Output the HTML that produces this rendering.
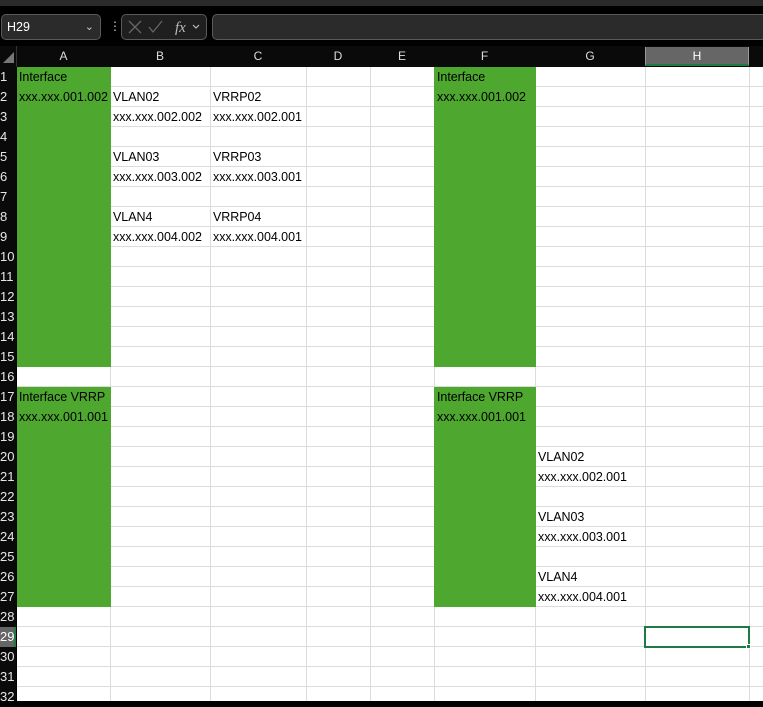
<!DOCTYPE html>
<html><head><meta charset="utf-8"><style>
*{margin:0;padding:0;box-sizing:border-box}
body{width:763px;height:701px;overflow:hidden;background:#000;font-family:"Liberation Sans",Arial,sans-serif;position:relative}
.a{position:absolute}
.grid{left:17px;top:67px;width:746px;height:634px;background:#fff repeating-linear-gradient(to bottom,transparent 0,transparent 19px,#dcdcdc 19px,#dcdcdc 20px)}
.v{position:absolute;top:67px;height:634px;width:1px;background:#dcdcdc}
.g{position:absolute;background:#4ea72e}
.t{position:absolute;font-size:12.5px;color:#000;white-space:nowrap;line-height:20px;letter-spacing:-0.05px}
.ch{position:absolute;top:47px;height:19px;color:#ddd;font-size:12px;text-align:center;line-height:19px}
.rh{position:absolute;left:0;width:16px;height:20px;color:#e8e8e8;font-size:13px;line-height:20px;padding-left:0;overflow:hidden;white-space:nowrap}
</style></head><body>
<div class="a" style="left:0;top:0;width:763px;height:6px;background:#2b2b2b"></div>
<div class="a" style="left:1px;top:14px;width:100px;height:26px;border:1px solid #5a5a5a;border-radius:5px;background:#2b2b2b;color:#fff;font-size:12.5px;line-height:24px;padding-left:5px">H29<span style="position:absolute;right:6px;top:0;color:#ccc;font-size:11px">&#8964;</span></div>
<div class="a" style="left:109px;top:19px;color:#ccc;font-size:12px;line-height:14px">&#8942;</div>
<div class="a" style="left:121px;top:14px;width:86px;height:26px;border:1px solid #5a5a5a;border-radius:5px;background:#1f1f1f"></div>
<svg class="a" style="left:121px;top:14px" width="86" height="26"><path d="M8 7l12 12M20 7L8 19" stroke="#666" stroke-width="1.3" fill="none"/><path d="M28 13l4 5 9-11" stroke="#666" stroke-width="1.3" fill="none"/><text x="54" y="18" font-family="Liberation Serif" font-style="italic" font-size="15" fill="#bbb">fx</text><path d="M72 11l3 3 3-3" stroke="#bbb" stroke-width="1.2" fill="none"/></svg>
<div class="a" style="left:212px;top:14px;width:560px;height:26px;border:1px solid #5a5a5a;border-radius:5px;background:#2b2b2b"></div>
<div class="a" style="left:0;top:46px;width:763px;height:21px;background:#0a0a0a"></div>
<svg class="a" style="left:2px;top:51px" width="14" height="14"><path d="M12 1V12H1Z" fill="#777"/></svg>
<div class="ch" style="left:17px;width:93px">A</div>
<div class="ch" style="left:110px;width:100px">B</div>
<div class="ch" style="left:210px;width:96px">C</div>
<div class="ch" style="left:306px;width:64px">D</div>
<div class="ch" style="left:370px;width:64px">E</div>
<div class="ch" style="left:434px;width:101px">F</div>
<div class="ch" style="left:535px;width:110px">G</div>
<div class="ch" style="left:645px;width:104px;background:#666;color:#fff;border-left:1px solid #999;border-right:1px solid #999;border-bottom:2px solid #1e7a45">H</div>
<div class="a" style="left:16px;top:46px;width:1px;height:21px;background:#333"></div>
<div class="a grid"></div>
<div class="v" style="left:110px"></div><div class="v" style="left:210px"></div><div class="v" style="left:306px"></div><div class="v" style="left:370px"></div><div class="v" style="left:434px"></div><div class="v" style="left:535px"></div><div class="v" style="left:645px"></div><div class="v" style="left:749px"></div>
<div class="g" style="left:17px;top:67px;width:94px;height:300px"></div>
<div class="g" style="left:17px;top:387px;width:94px;height:220px"></div>
<div class="g" style="left:434px;top:67px;width:102px;height:300px"></div>
<div class="g" style="left:434px;top:387px;width:102px;height:220px"></div>
<div class="a" style="left:0;top:67px;width:16px;height:634px;background:#0a0a0a"></div>
<div class="rh" style="top:67px">1</div><div class="rh" style="top:87px">2</div><div class="rh" style="top:107px">3</div><div class="rh" style="top:127px">4</div><div class="rh" style="top:147px">5</div><div class="rh" style="top:167px">6</div><div class="rh" style="top:187px">7</div><div class="rh" style="top:207px">8</div><div class="rh" style="top:227px">9</div><div class="rh" style="top:247px">10</div><div class="rh" style="top:267px">11</div><div class="rh" style="top:287px">12</div><div class="rh" style="top:307px">13</div><div class="rh" style="top:327px">14</div><div class="rh" style="top:347px">15</div><div class="rh" style="top:367px">16</div><div class="rh" style="top:387px">17</div><div class="rh" style="top:407px">18</div><div class="rh" style="top:427px">19</div><div class="rh" style="top:447px">20</div><div class="rh" style="top:467px">21</div><div class="rh" style="top:487px">22</div><div class="rh" style="top:507px">23</div><div class="rh" style="top:527px">24</div><div class="rh" style="top:547px">25</div><div class="rh" style="top:567px">26</div><div class="rh" style="top:587px">27</div><div class="rh" style="top:607px">28</div><div class="rh" style="top:627px;background:#666;color:#fff;border-right:2px solid #1e7a45">29</div><div class="rh" style="top:647px">30</div><div class="rh" style="top:667px">31</div><div class="rh" style="top:687px">32</div>
<div class="t" style="left:19px;top:67px">Interface</div>
<div class="t" style="left:19px;top:87px">xxx.xxx.001.002</div>
<div class="t" style="left:113px;top:87px">VLAN02</div>
<div class="t" style="left:213px;top:87px">VRRP02</div>
<div class="t" style="left:113px;top:107px">xxx.xxx.002.002</div>
<div class="t" style="left:213px;top:107px">xxx.xxx.002.001</div>
<div class="t" style="left:113px;top:147px">VLAN03</div>
<div class="t" style="left:213px;top:147px">VRRP03</div>
<div class="t" style="left:113px;top:167px">xxx.xxx.003.002</div>
<div class="t" style="left:213px;top:167px">xxx.xxx.003.001</div>
<div class="t" style="left:113px;top:207px">VLAN4</div>
<div class="t" style="left:213px;top:207px">VRRP04</div>
<div class="t" style="left:113px;top:227px">xxx.xxx.004.002</div>
<div class="t" style="left:213px;top:227px">xxx.xxx.004.001</div>
<div class="t" style="left:437px;top:67px">Interface</div>
<div class="t" style="left:437px;top:87px">xxx.xxx.001.002</div>
<div class="t" style="left:19px;top:387px">Interface VRRP</div>
<div class="t" style="left:19px;top:407px">xxx.xxx.001.001</div>
<div class="t" style="left:437px;top:387px">Interface VRRP</div>
<div class="t" style="left:437px;top:407px">xxx.xxx.001.001</div>
<div class="t" style="left:538px;top:447px">VLAN02</div>
<div class="t" style="left:538px;top:467px">xxx.xxx.002.001</div>
<div class="t" style="left:538px;top:507px">VLAN03</div>
<div class="t" style="left:538px;top:527px">xxx.xxx.003.001</div>
<div class="t" style="left:538px;top:567px">VLAN4</div>
<div class="t" style="left:538px;top:587px">xxx.xxx.004.001</div>
<div class="a" style="left:644px;top:626px;width:106px;height:22px;border:2px solid #1e7a45"></div>
<div class="a" style="left:746px;top:644px;width:5px;height:5px;background:#1e7a45;border:1px solid #fff"></div>
</body></html>
